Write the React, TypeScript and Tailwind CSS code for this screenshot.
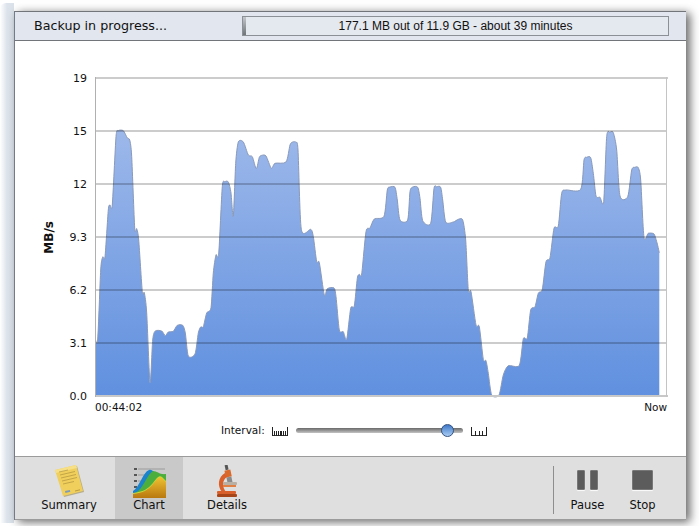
const LUCIDA = "font-['DejaVu_Sans',sans-serif]";

// speed curve, in page pixels
const points: [number, number][] = [
  [95.5, 340], [97.7, 339], [100.7, 270], [102.7, 257], [105, 256.7], [108.3, 210], [110, 205], [112.3, 205],
  [116, 136.7], [118.3, 130.7], [123.3, 130.7], [127.3, 138], [129.7, 140], [131.7, 156.7], [134.7, 228], [136.7, 228.7],
  [138.7, 240], [142.3, 291.7], [144.3, 292.7], [146.7, 313], [150, 382.7], [152.7, 340], [155.3, 331], [161.7, 331],
  [165.3, 335.7], [168.3, 332], [173.3, 331.3], [177.3, 325.3], [182.7, 325.3], [185.3, 333], [188.3, 356], [195, 354],
  [198.3, 333], [200.7, 327], [203.3, 326.7], [206.7, 313], [211, 307.7], [213.3, 273], [216, 255], [218.7, 254],
  [222.3, 186.7], [225, 181.7], [228.3, 182], [231, 193], [233.3, 216], [235.7, 163.3], [238.3, 142], [243.3, 142],
  [248.3, 155], [252.3, 156.7], [256.3, 168.7], [259.3, 157.3], [262, 155.3], [266, 156], [271.3, 168.3], [275, 163.3],
  [286, 162], [290, 145], [292.7, 142], [296, 142.3], [298, 150], [301.3, 229.3], [310.7, 229.3], [313.3, 236.7],
  [316.7, 261.7], [319.3, 262.7], [324.3, 295], [327.3, 288.7], [334, 288], [336, 296.7], [339.3, 330], [343.3, 331.7],
  [346.7, 339.3], [350.7, 308.3], [354.3, 306], [357.3, 278.3], [359.3, 274.3], [361.7, 274], [366, 231.7], [370, 228],
  [374.3, 219], [384, 216.3], [387.3, 190], [390, 187], [395, 187.3], [397.3, 200], [400, 220], [407.7, 220],
  [410, 191.7], [412.7, 187], [417.7, 187.3], [420, 198.3], [422.7, 220.7], [430.7, 223.3], [434, 188.3], [436.7, 186.7],
  [440.7, 187.3], [442.7, 200], [445.7, 222], [453.3, 222], [458.3, 219.3], [462.7, 220], [465.7, 240], [468.3, 290],
  [471, 291.7], [476, 325], [479.3, 326.7], [483.3, 359.3], [486, 360.7], [488.3, 373.3], [491.7, 395], [499, 395],
  [503.3, 375], [508.3, 365.7], [519.3, 365.3], [523.3, 338.7], [527.3, 338], [530.7, 310], [535, 306.7], [538.3, 293.3],
  [542.3, 289.3], [546, 261.7], [550, 257.7], [554, 228.3], [558.3, 226], [561.7, 193.3], [566, 190], [580.7, 189.3],
  [584, 160], [586.7, 157.3], [590.7, 157.7], [593.3, 173.3], [596, 196], [600, 197.3], [603.7, 201.7], [606.7, 136.7],
  [610, 132.3], [613.3, 132.7], [616.7, 150], [620, 196], [627.7, 196.7], [631.7, 170], [635, 167.3], [638.3, 167.7],
  [640.7, 180], [644, 237.3], [648.3, 233.3], [654, 234], [656.7, 241.7], [659.3, 252.7],
];

function smoothLine(pts: [number, number][]) {
  let d = `M${pts[0][0]} ${pts[0][1]}`;
  for (let i = 0; i < pts.length - 1; i++) {
    const p0 = pts[Math.max(i - 1, 0)];
    const p1 = pts[i];
    const p2 = pts[i + 1];
    const p3 = pts[Math.min(i + 2, pts.length - 1)];
    const c1x = p1[0] + (p2[0] - p0[0]) / 8;
    const c1y = p1[1] + (p2[1] - p0[1]) / 8;
    const c2x = p2[0] - (p3[0] - p1[0]) / 8;
    const c2y = p2[1] - (p3[1] - p1[1]) / 8;
    d += ` C${c1x.toFixed(1)} ${c1y.toFixed(1)} ${c2x.toFixed(1)} ${c2y.toFixed(1)} ${p2[0]} ${p2[1]}`;
  }
  return d;
}

const line = smoothLine(points);

function Plot() {
  return (
    <svg width="573" height="321" viewBox="95 77 573 321" className="block">
      <defs>
        <linearGradient id="area" gradientUnits="userSpaceOnUse" x1="0" y1="130" x2="0" y2="396">
          <stop offset="0" stopColor="#9db8ea" />
          <stop offset="1" stopColor="#6090df" />
        </linearGradient>
      </defs>
      <path d={`${line} L659.3 396 L95.5 396 Z`} fill="url(#area)" />
      <path d={line} fill="none" stroke="#8899ba" strokeWidth="1" />
      {[131, 184, 237, 290, 343].map((y) => (
        <rect key={y} x="96" y={y - 1} width="571" height="2" fill="#000" opacity="0.2" />
      ))}
      <rect x="95" y="77" width="573" height="2" fill="#cccccc" />
      <rect x="95" y="395" width="573" height="2" fill="#c8c8c8" />
      <rect x="95" y="77" width="1" height="320" fill="#b0b0b0" />
      <rect x="666" y="77" width="1" height="320" fill="#c4c4c4" />
    </svg>
  );
}

function Ticks({ count }: { count: number }) {
  const w = 16;
  const step = (w - 1) / (count - 1);
  return (
    <svg width={w} height="10" viewBox={`0 0 ${w} 10`} className="block mt-[2px]">
      <rect x="0" y="9" width={w} height="1" fill="#333" />
      {Array.from({ length: count }, (_, i) => {
        const edge = i === 0 || i === count - 1;
        return <rect key={i} x={Math.round(i * step)} y={edge ? 1 : 5} width="1" height={edge ? 9 : 5} fill="#222" />;
      })}
    </svg>
  );
}

function SummaryIcon() {
  return (
    <svg width="32" height="34" viewBox="0 0 32 34" className="block">
      <polygon points="3,7 24,2 31,28 11,33" fill="#8a7a3a" opacity="0.5" />
      <polygon points="2,6 23,1 30,27 10,32" fill="#f0cf5c" />
      <polygon points="2,6 23,1 24,4 3,9" fill="#f6df84" />
      <g stroke="#a98e3a" strokeWidth="0.8" opacity="0.8">
        <line x1="6" y1="8" x2="15" y2="6" />
        <line x1="7" y1="11" x2="22" y2="7.5" />
        <line x1="8" y1="14" x2="23" y2="10.5" />
        <line x1="9" y1="17" x2="24" y2="13.5" />
        <line x1="10" y1="20" x2="21" y2="17.5" />
      </g>
      <rect x="12" y="27" width="5" height="2" fill="#7d9bb8" transform="rotate(-13 12 27)" />
      <line x1="22" y1="27" x2="27" y2="25.8" stroke="#a98e3a" strokeWidth="0.8" />
    </svg>
  );
}

function ChartIcon() {
  return (
    <svg width="33" height="32" viewBox="0 0 33 32" className="block">
      <defs>
        <linearGradient id="gold" x1="0" y1="0" x2="0" y2="1">
          <stop offset="0" stopColor="#eec032" />
          <stop offset="1" stopColor="#b9780f" />
        </linearGradient>
      </defs>
      <g stroke="#888" strokeWidth="0.7">
        <line x1="5" y1="3" x2="32" y2="3" />
        <line x1="5" y1="9" x2="32" y2="9" />
        <line x1="5" y1="15" x2="32" y2="15" />
        <line x1="5" y1="21" x2="32" y2="21" />
      </g>
      <g fill="#555">
        <rect x="1" y="2" width="3" height="2" />
        <rect x="1" y="8" width="3" height="2" />
        <rect x="1" y="14" width="3" height="2" />
        <rect x="1" y="20" width="3" height="2" />
      </g>
      <path d="M0 25 C6 22 10 6 16 4 C20 3 22 8 24 9 L24 32 L0 32 Z" fill="#1b82cc" />
      <path d="M2 27 C10 24 14 8 20 5 C24 5 27 9 33 8 L33 32 L0 32 Z" fill="#4cae3c" />
      <path d="M0 27 C10 26 15 23 20 17 C24 12 26 9 29 11 L33 15 L33 32 L0 32 Z" fill="#c9d63c" />
      <path d="M0 28 C10 27 15 24 20 18 C24 13 26 10 29 12 L33 16 L33 32 L0 32 Z" fill="url(#gold)" />
    </svg>
  );
}

function DetailsIcon() {
  return (
    <svg width="22" height="33" viewBox="0 0 22 33" className="block">
      <rect x="9" y="0" width="3" height="5" fill="#555" transform="rotate(-12 10 2)" />
      <rect x="9" y="5" width="6" height="7" fill="#d8692a" transform="rotate(-12 12 8)" />
      <rect x="11" y="12" width="5" height="6" fill="#8a8a8a" transform="rotate(-12 13 15)" />
      <path d="M9 8 C2 12 1 21 6 27 L10 27 C6 22 6 15 11 12 Z" fill="#d9602a" />
      <rect x="7" y="17" width="14" height="3" rx="1" fill="#b8b0a4" />
      <rect x="7" y="20" width="13" height="2" fill="#e08045" />
      <rect x="1" y="26" width="19" height="3" rx="1" fill="#d9602a" />
      <rect x="1" y="29" width="20" height="3" rx="1" fill="#a84518" />
    </svg>
  );
}

function ToolItem({ label, icon, selected, className }: { label: string; icon: React.ReactNode; selected?: boolean; className: string }) {
  return (
    <div className={`${className} h-full flex flex-col items-center ${selected ? "bg-[#c9c9c9]" : ""}`}>
      <div className="h-[41px] flex items-end justify-center">{icon}</div>
      <span className={`${LUCIDA} text-[11.5px] leading-[14px] text-[#111]`}>{label}</span>
    </div>
  );
}

export default function App() {
  return (
    <div className="w-[699px] h-[526px] bg-white overflow-hidden flex">
      {/* soft edge left of the window */}
      <div className="w-[14px] h-[520px] mt-[3px] rounded-tl-[6px] bg-gradient-to-r from-[#ffffff] via-[#dde3eb] to-[#dbe2ea]" />

      <div className="w-[672px] h-[509px] mt-[11px] border-l border-[#737b86] flex flex-col bg-white shadow-[4px_2px_9px_rgba(0,0,0,0.6)]">
        {/* status bar */}
        <div className="h-[30px] shrink-0 border-y border-[#72767b] bg-[#e2e6ee] flex items-center pl-[19px]">
          <span className={`${LUCIDA} text-[12.7px] leading-none text-[#111] w-[208px]`}>Backup in progress...</span>
          <div className="relative w-[427px] h-[20px] border border-[#8b9096] bg-[#e4e8ef] flex items-center justify-center">
            <div className="absolute left-0 top-0 bottom-0 w-[3px] bg-gradient-to-b from-[#c4c8cc] to-[#6f7478]" />
            <span className="font-['Liberation_Sans',sans-serif] text-[12px] leading-none text-[#111]">
              177.1 MB out of 11.9 GB - about 39 minutes
            </span>
          </div>
        </div>

        {/* chart area */}
        <div className="flex-1 bg-white flex flex-col">
          <div className="flex items-start pt-[30px] pl-[27px]">
            <div className="w-[14px] h-[332px] flex items-center justify-center">
              <span className={`${LUCIDA} text-[12px] font-bold leading-none text-[#111] [writing-mode:vertical-rl] rotate-180`}>MB/s</span>
            </div>
            <div className={`${LUCIDA} w-[31px] h-[332px] mt-[1px] flex flex-col justify-between items-end text-[11px] leading-[14px] text-[#111]`}>
              <span>19</span>
              <span>15</span>
              <span>12</span>
              <span>9.3</span>
              <span>6.2</span>
              <span>3.1</span>
              <span>0.0</span>
            </div>
            <div className="ml-[8px] pt-[6px]">
              <Plot />
              <div className={`${LUCIDA} w-[572px] mt-[2px] flex justify-between text-[10.5px] leading-[14px] text-[#111]`}>
                <span>00:44:02</span>
                <span>Now</span>
              </div>
            </div>
          </div>

          {/* interval slider */}
          <div className="flex items-center h-[14px] mt-[9px] pl-[206px]">
            <span className={`${LUCIDA} text-[10.5px] leading-none text-[#111] w-[51px]`}>Interval:</span>
            <Ticks count={9} />
            <div className="relative w-[167px] h-[5px] ml-[8px] rounded-full bg-gradient-to-b from-[#6a6a6a] to-[#c4c4c4]">
              <div className="absolute left-[145px] top-[-4px] w-[13px] h-[13px] rounded-full border border-[#33517f] bg-gradient-to-b from-[#3f78c8] to-[#a9cdf4]" />
            </div>
            <div className="ml-[8px]">
              <Ticks count={5} />
            </div>
          </div>
        </div>

        {/* toolbar */}
        <div className="h-[64px] shrink-0 border-t border-b border-[#9b9b9b] bg-[#dfdfdf] flex pr-[22px]">
          <ToolItem label="Summary" icon={<SummaryIcon />} className="w-[100px] pl-[8px]" />
          <ToolItem label="Chart" icon={<ChartIcon />} selected className="w-[68px]" />
          <ToolItem label="Details" icon={<DetailsIcon />} className="w-[88px]" />
          <div className="flex-1" />
          <div className="w-px h-[48px] mt-[9px] bg-[#8e8e8e]" />
          <div className="w-[67px] flex flex-col items-center">
            <div className="h-[41px] flex items-end gap-[5px] pb-[8px]">
              <div className="w-[8px] h-[20px] rounded-[1px] bg-[#5c5c5c] shadow-[0_1px_1px_rgba(255,255,255,0.9)] border border-[#777]" />
              <div className="w-[8px] h-[20px] rounded-[1px] bg-[#5c5c5c] shadow-[0_1px_1px_rgba(255,255,255,0.9)] border border-[#777]" />
            </div>
            <span className={`${LUCIDA} text-[11.5px] leading-[14px] text-[#111]`}>Pause</span>
          </div>
          <div className="w-[43px] flex flex-col items-center">
            <div className="h-[41px] flex items-end pb-[8px]">
              <div className="w-[21px] h-[20px] rounded-[1px] bg-[#5c5c5c] shadow-[0_1px_1px_rgba(255,255,255,0.9)] border border-[#777]" />
            </div>
            <span className={`${LUCIDA} text-[11.5px] leading-[14px] text-[#111]`}>Stop</span>
          </div>
        </div>
      </div>
    </div>
  );
}
